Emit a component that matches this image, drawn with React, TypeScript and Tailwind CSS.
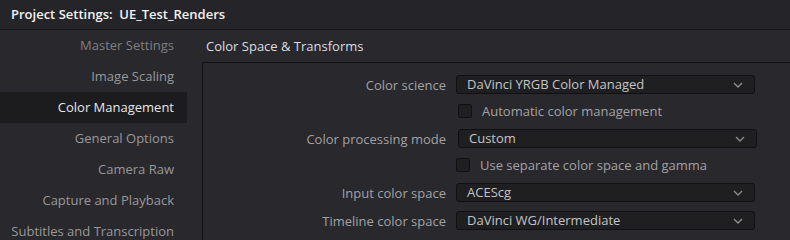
import * as React from "react"

const NAV_ITEMS = [
  { label: "Master Settings", dim: true },
  { label: "Image Scaling" },
  { label: "Color Management", active: true },
  { label: "General Options" },
  { label: "Camera Raw" },
  { label: "Capture and Playback" },
  { label: "Subtitles and Transcription" },
]

function Chevron() {
  return (
    <svg width="10" height="6" viewBox="0 0 10 6" className="shrink-0">
      <path d="M1 1 L5 5 L9 1" fill="none" stroke="#8a8a8e" strokeWidth="1.4" />
    </svg>
  )
}

function Dropdown({ value, className = "" }: { value: string; className?: string }) {
  return (
    <div
      className={`flex h-[19px] w-[299px] items-center justify-between rounded-[3px] border border-[#111113] bg-[#1f1f21] pl-[10px] pr-[11px] text-[#c4c4c6] ${className}`}
    >
      <span className="leading-none">{value}</span>
      <Chevron />
    </div>
  )
}

function Checkbox({ label, className = "" }: { label: string; className?: string }) {
  return (
    <div className={`flex items-center ${className}`}>
      <div className="h-[14px] w-[14px] rounded-[2px] border border-[#111113] bg-[#1f1f21]" />
      <span className="ml-[10px] leading-none text-[#a2a2a4]">{label}</span>
    </div>
  )
}

function Row({ label, children, className = "" }: { label?: string; children: React.ReactNode; className?: string }) {
  return (
    <div className={`flex items-center ${className}`}>
      <div className="w-[243px] pt-[2px] text-right leading-none text-[#a2a2a4]">{label}</div>
      {children}
    </div>
  )
}

export default function App() {
  return (
    <div
      className="h-[240px] w-[790px] overflow-hidden bg-[#28282d] text-[13px]"
      style={{ fontFamily: '"Open Sans", "Noto Sans", sans-serif' }}
    >
      <header className="flex h-[30px] items-center border-b border-[#19191b] bg-[#252529] pl-[11px]">
        <span className="font-semibold text-[#f2f2f2]">Project Settings:&nbsp; UE_Test_Renders</span>
      </header>

      <div className="flex">
        <nav className="w-[187px] shrink-0">
          {NAV_ITEMS.map((item) => (
            <div
              key={item.label}
              className={`flex h-[31px] items-center justify-end pr-[13px] ${
                item.active
                  ? "bg-[#1c1c1e] text-[#e6e6e8]"
                  : item.dim
                    ? "text-[#7f7f82]"
                    : "text-[#98989b]"
              }`}
            >
              {item.label}
            </div>
          ))}
        </nav>

        <section className="flex-1 pl-[15px]">
          <h2 className="flex h-[32px] items-center pl-[4px] pt-[1px] text-[#dedee0]">
            Color Space &amp; Transforms
          </h2>
          <div className="h-[200px] border-l border-t border-[#111113] pt-[12px]">
            <Row label="Color science">
              <Dropdown value="DaVinci YRGB Color Managed" className="ml-[10px]" />
            </Row>
            <Row className="mt-[10px]">
              <Checkbox label="Automatic color management" className="ml-[12px]" />
            </Row>
            <Row label="Color processing mode" className="mt-[11px]">
              <Dropdown value="Custom" className="ml-[12px]" />
            </Row>
            <Row className="mt-[10px]">
              <Checkbox label="Use separate color space and gamma" className="ml-[10px]" />
            </Row>
            <Row label="Input color space" className="mt-[11px]">
              <Dropdown value="ACEScg" className="ml-[10px]" />
            </Row>
            <Row label="Timeline color space" className="mt-[9px]">
              <Dropdown value="DaVinci WG/Intermediate" className="ml-[10px]" />
            </Row>
          </div>
        </section>
      </div>
    </div>
  )
}
